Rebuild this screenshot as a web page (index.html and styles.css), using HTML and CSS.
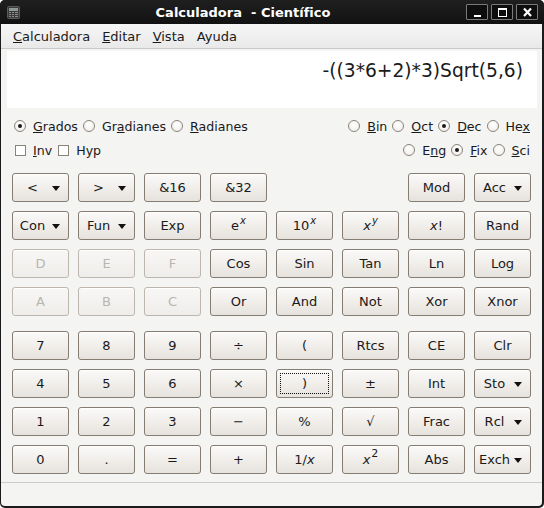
FILE: index.html
```html
<!DOCTYPE html>
<html lang="es">
<head>
<meta charset="utf-8">
<title>Calculadora - Científico</title>
<link rel="stylesheet" href="styles.css">
</head>
<body>
<div class="window">
  <div class="titlebar">
    <svg class="appicon" width="13" height="13" viewBox="0 0 13 13">
      <rect x="0.5" y="0.5" width="12" height="12" rx="1" fill="#3b3b3b" stroke="#5a5a5a"/>
      <rect x="2" y="2" width="9" height="3" fill="#8d9a94"/>
      <g fill="#8a8a8a">
        <rect x="2" y="6" width="2" height="1"/><rect x="5" y="6" width="2" height="1"/><rect x="8" y="6" width="3" height="1"/>
        <rect x="2" y="8" width="2" height="1"/><rect x="5" y="8" width="2" height="1"/><rect x="8" y="8" width="3" height="1"/>
        <rect x="2" y="10" width="2" height="1"/><rect x="5" y="10" width="2" height="1"/><rect x="8" y="10" width="3" height="1"/>
      </g>
    </svg>
    <div class="title">Calculadora&nbsp; - Científico</div>
    <div class="wm-buttons">
      <div class="wm-btn"><svg width="19" height="13" viewBox="0 0 19 13"><rect x="6" y="9" width="7" height="2" fill="#fff"/></svg></div>
      <div class="wm-btn"><svg width="19" height="13" viewBox="0 0 19 13"><rect x="5.5" y="2.5" width="8" height="8" fill="none" stroke="#fff"/><rect x="5" y="2" width="9" height="2" fill="#fff"/></svg></div>
      <div class="wm-btn"><svg width="19" height="13" viewBox="0 0 19 13"><path d="M6 2.5 L13 10 M13 2.5 L6 10" stroke="#fff" stroke-width="2.2"/></svg></div>
    </div>
  </div>
  <div class="client">
    <div class="menubar">
      <span class="menu-item"><u>C</u>alculadora</span>
      <span class="menu-item"><u>E</u>ditar</span>
      <span class="menu-item"><u>V</u>ista</span>
      <span class="menu-item">Ayuda</span>
    </div>
    <div class="display"><span class="expr">-((3*6+2)*3)Sqrt(5,6)</span></div>
    <div class="options">
      <div class="opt-row">
        <div class="group">
          <span class="opt"><span class="radio checked"></span><span class="lbl"><u>G</u>rados</span></span>
          <span class="opt"><span class="radio"></span><span class="lbl">Gr<u>a</u>dianes</span></span>
          <span class="opt"><span class="radio"></span><span class="lbl"><u>R</u>adianes</span></span>
        </div>
        <div class="group">
          <span class="opt"><span class="radio"></span><span class="lbl"><u>B</u>in</span></span>
          <span class="opt"><span class="radio"></span><span class="lbl"><u>O</u>ct</span></span>
          <span class="opt"><span class="radio checked"></span><span class="lbl"><u>D</u>ec</span></span>
          <span class="opt last"><span class="radio"></span><span class="lbl">He<u>x</u></span></span>
        </div>
      </div>
      <div class="opt-row">
        <div class="group">
          <span class="opt"><span class="check"></span><span class="lbl"><u>I</u>nv</span></span>
          <span class="opt"><span class="check"></span><span class="lbl">Hyp</span></span>
        </div>
        <div class="group">
          <span class="opt"><span class="radio"></span><span class="lbl">E<u>n</u>g</span></span>
          <span class="opt"><span class="radio checked"></span><span class="lbl"><u>F</u>ix</span></span>
          <span class="opt last"><span class="radio"></span><span class="lbl"><u>S</u>ci</span></span>
        </div>
      </div>
    </div>
    <div class="keypad">
      <div class="keys">
        <div class="btn drop"><span class="t">&lt;</span><span class="arrow"></span></div>
        <div class="btn drop"><span class="t">&gt;</span><span class="arrow"></span></div>
        <div class="btn">&amp;16</div>
        <div class="btn">&amp;32</div>
        <div class="empty"></div>
        <div class="empty"></div>
        <div class="btn">Mod</div>
        <div class="btn drop"><span class="t">Acc</span><span class="arrow"></span></div>

        <div class="btn drop"><span class="t">Con</span><span class="arrow"></span></div>
        <div class="btn drop"><span class="t">Fun</span><span class="arrow"></span></div>
        <div class="btn">Exp</div>
        <div class="btn">e<sup><i>x</i></sup></div>
        <div class="btn">10<sup><i>x</i></sup></div>
        <div class="btn"><i>x</i><sup><i>y</i></sup></div>
        <div class="btn"><i>x</i>!</div>
        <div class="btn">Rand</div>

        <div class="btn off">D</div>
        <div class="btn off">E</div>
        <div class="btn off">F</div>
        <div class="btn">Cos</div>
        <div class="btn">Sin</div>
        <div class="btn">Tan</div>
        <div class="btn">Ln</div>
        <div class="btn">Log</div>

        <div class="btn off">A</div>
        <div class="btn off">B</div>
        <div class="btn off">C</div>
        <div class="btn">Or</div>
        <div class="btn">And</div>
        <div class="btn">Not</div>
        <div class="btn">Xor</div>
        <div class="btn">Xnor</div>
      </div>
      <div class="keys">
        <div class="btn">7</div>
        <div class="btn">8</div>
        <div class="btn">9</div>
        <div class="btn">÷</div>
        <div class="btn">(</div>
        <div class="btn">Rtcs</div>
        <div class="btn">CE</div>
        <div class="btn">Clr</div>

        <div class="btn">4</div>
        <div class="btn">5</div>
        <div class="btn">6</div>
        <div class="btn">×</div>
        <div class="btn focus">)</div>
        <div class="btn">±</div>
        <div class="btn">Int</div>
        <div class="btn drop"><span class="t">Sto</span><span class="arrow"></span></div>

        <div class="btn">1</div>
        <div class="btn">2</div>
        <div class="btn">3</div>
        <div class="btn">−</div>
        <div class="btn">%</div>
        <div class="btn">√</div>
        <div class="btn">Frac</div>
        <div class="btn drop"><span class="t">Rcl</span><span class="arrow"></span></div>

        <div class="btn">0</div>
        <div class="btn">.</div>
        <div class="btn">=</div>
        <div class="btn">+</div>
        <div class="btn">1/<i>x</i></div>
        <div class="btn"><i>x</i><sup class="sq">2</sup></div>
        <div class="btn">Abs</div>
        <div class="btn drop"><span class="t">Exch</span><span class="arrow"></span></div>
      </div>
    </div>
    <div class="statusbar"></div>
  </div>
</div>
</body>
</html>
```
FILE: styles.css
```css
* { box-sizing: border-box; }
html, body { margin: 0; padding: 0; }
body {
  width: 544px;
  height: 508px;
  background: #ffffff;
  font-family: "DejaVu Sans", sans-serif;
  font-size: 13px;
  color: #1a1a1a;
  overflow: hidden;
}
.window {
  width: 544px;
  height: 508px;
  background: #1b1b1b;
  border-radius: 5px 5px 5px 5px;
  display: flex;
  flex-direction: column;
}
.titlebar {
  height: 24px;
  flex: none;
  display: flex;
  align-items: center;
  padding: 0 6px 0 7px;
  background: linear-gradient(#1f1f1f, #121212);
  border-radius: 5px 5px 0 0;
}
.appicon { flex: none; }
.title {
  flex: 1;
  text-align: center;
  color: #ffffff;
  font-weight: bold;
  font-size: 13px;
}
.wm-buttons { display: flex; gap: 3px; flex: none; }
.wm-btn {
  width: 22px;
  height: 16px;
  border: 1px solid #7a7a7a;
  border-radius: 1px;
  background: #0d0d0d;
  display: flex;
  align-items: center;
  justify-content: center;
}
.client {
  flex: 1;
  margin: 0 2px 2px 1px;
  background: #f4f4f3;
  border-radius: 0 0 4px 4px;
  display: flex;
  flex-direction: column;
}
.menubar {
  height: 25px;
  flex: none;
  display: flex;
  align-items: center;
  padding: 1px 0 0 6px;
  background: linear-gradient(#f6f6f6, #e9e9e9);
  border-bottom: 1px solid #c9c9c9;
}
.menu-item { padding: 0 6px; }
.display {
  height: 57px;
  flex: none;
  margin: 2px 5px 0 6px;
  background: #ffffff;
  display: flex;
  justify-content: flex-end;
  padding: 9px 14px 0 0;
}
.expr { font-size: 18.67px; }
.options {
  margin-top: 6px;
  padding: 0 12px 0 13px;
  flex: none;
  font-size: 12.6px;
}
.opt-row {
  height: 24px;
  display: flex;
  justify-content: space-between;
  align-items: center;
}
.group { display: flex; align-items: center; }
.opt { display: flex; align-items: center; margin-right: 5px; }
.opt.last { margin-right: 0; }
.lbl { margin-left: 7px; }
.radio {
  width: 12px;
  height: 12px;
  border-radius: 50%;
  border: 1px solid #8a8379;
  background: radial-gradient(circle at 50% 35%, #ffffff, #eeece9);
  position: relative;
  flex: none;
}
.radio.checked::after {
  content: "";
  position: absolute;
  left: 3px;
  top: 3px;
  width: 4px;
  height: 4px;
  border-radius: 50%;
  background: #1a1a1a;
}
.check {
  width: 11px;
  height: 11px;
  border: 1px solid #8a8379;
  background: #ffffff;
  flex: none;
  margin-left: 1px;
}
.keypad {
  margin-top: 11px;
  padding-left: 11px;
  display: flex;
  flex-direction: column;
  gap: 15px;
  flex: none;
}
.keys {
  display: grid;
  grid-template-columns: repeat(8, 57px);
  grid-auto-rows: 29px;
  column-gap: 9px;
  row-gap: 9px;
}
.btn {
  border: 1px solid #857d72;
  border-radius: 3px;
  background: linear-gradient(#fbfaf9, #efece8 60%, #e6e2dd);
  box-shadow: inset 0 1px 0 #ffffff;
  display: flex;
  align-items: center;
  justify-content: center;
  white-space: nowrap;
  position: relative;
}
.btn.off {
  color: #b9b5af;
  border-color: #bdb7af;
  background: linear-gradient(#f8f7f6, #efedea);
}
.btn.drop { justify-content: flex-start; padding-left: 2px; }
.btn.drop .t { flex: 1; text-align: center; }
.arrow {
  width: 0;
  height: 0;
  border-left: 4px solid transparent;
  border-right: 4px solid transparent;
  border-top: 5px solid #111;
  margin: 1px 8px 0 2px;
  flex: none;
}
.btn.focus::after {
  content: "";
  position: absolute;
  left: 3px;
  top: 3px;
  right: 3px;
  bottom: 3px;
  border: 1px dotted #111;
}
sup {
  font-size: 10px;
  vertical-align: 0;
  position: relative;
  top: -5px;
  margin-left: 1px;
}
sup.sq { font-size: 11px; top: -6px; }
.statusbar {
  margin-top: 8px;
  flex: 1;
  border-top: 1px solid #cbcbcb;
}
```
